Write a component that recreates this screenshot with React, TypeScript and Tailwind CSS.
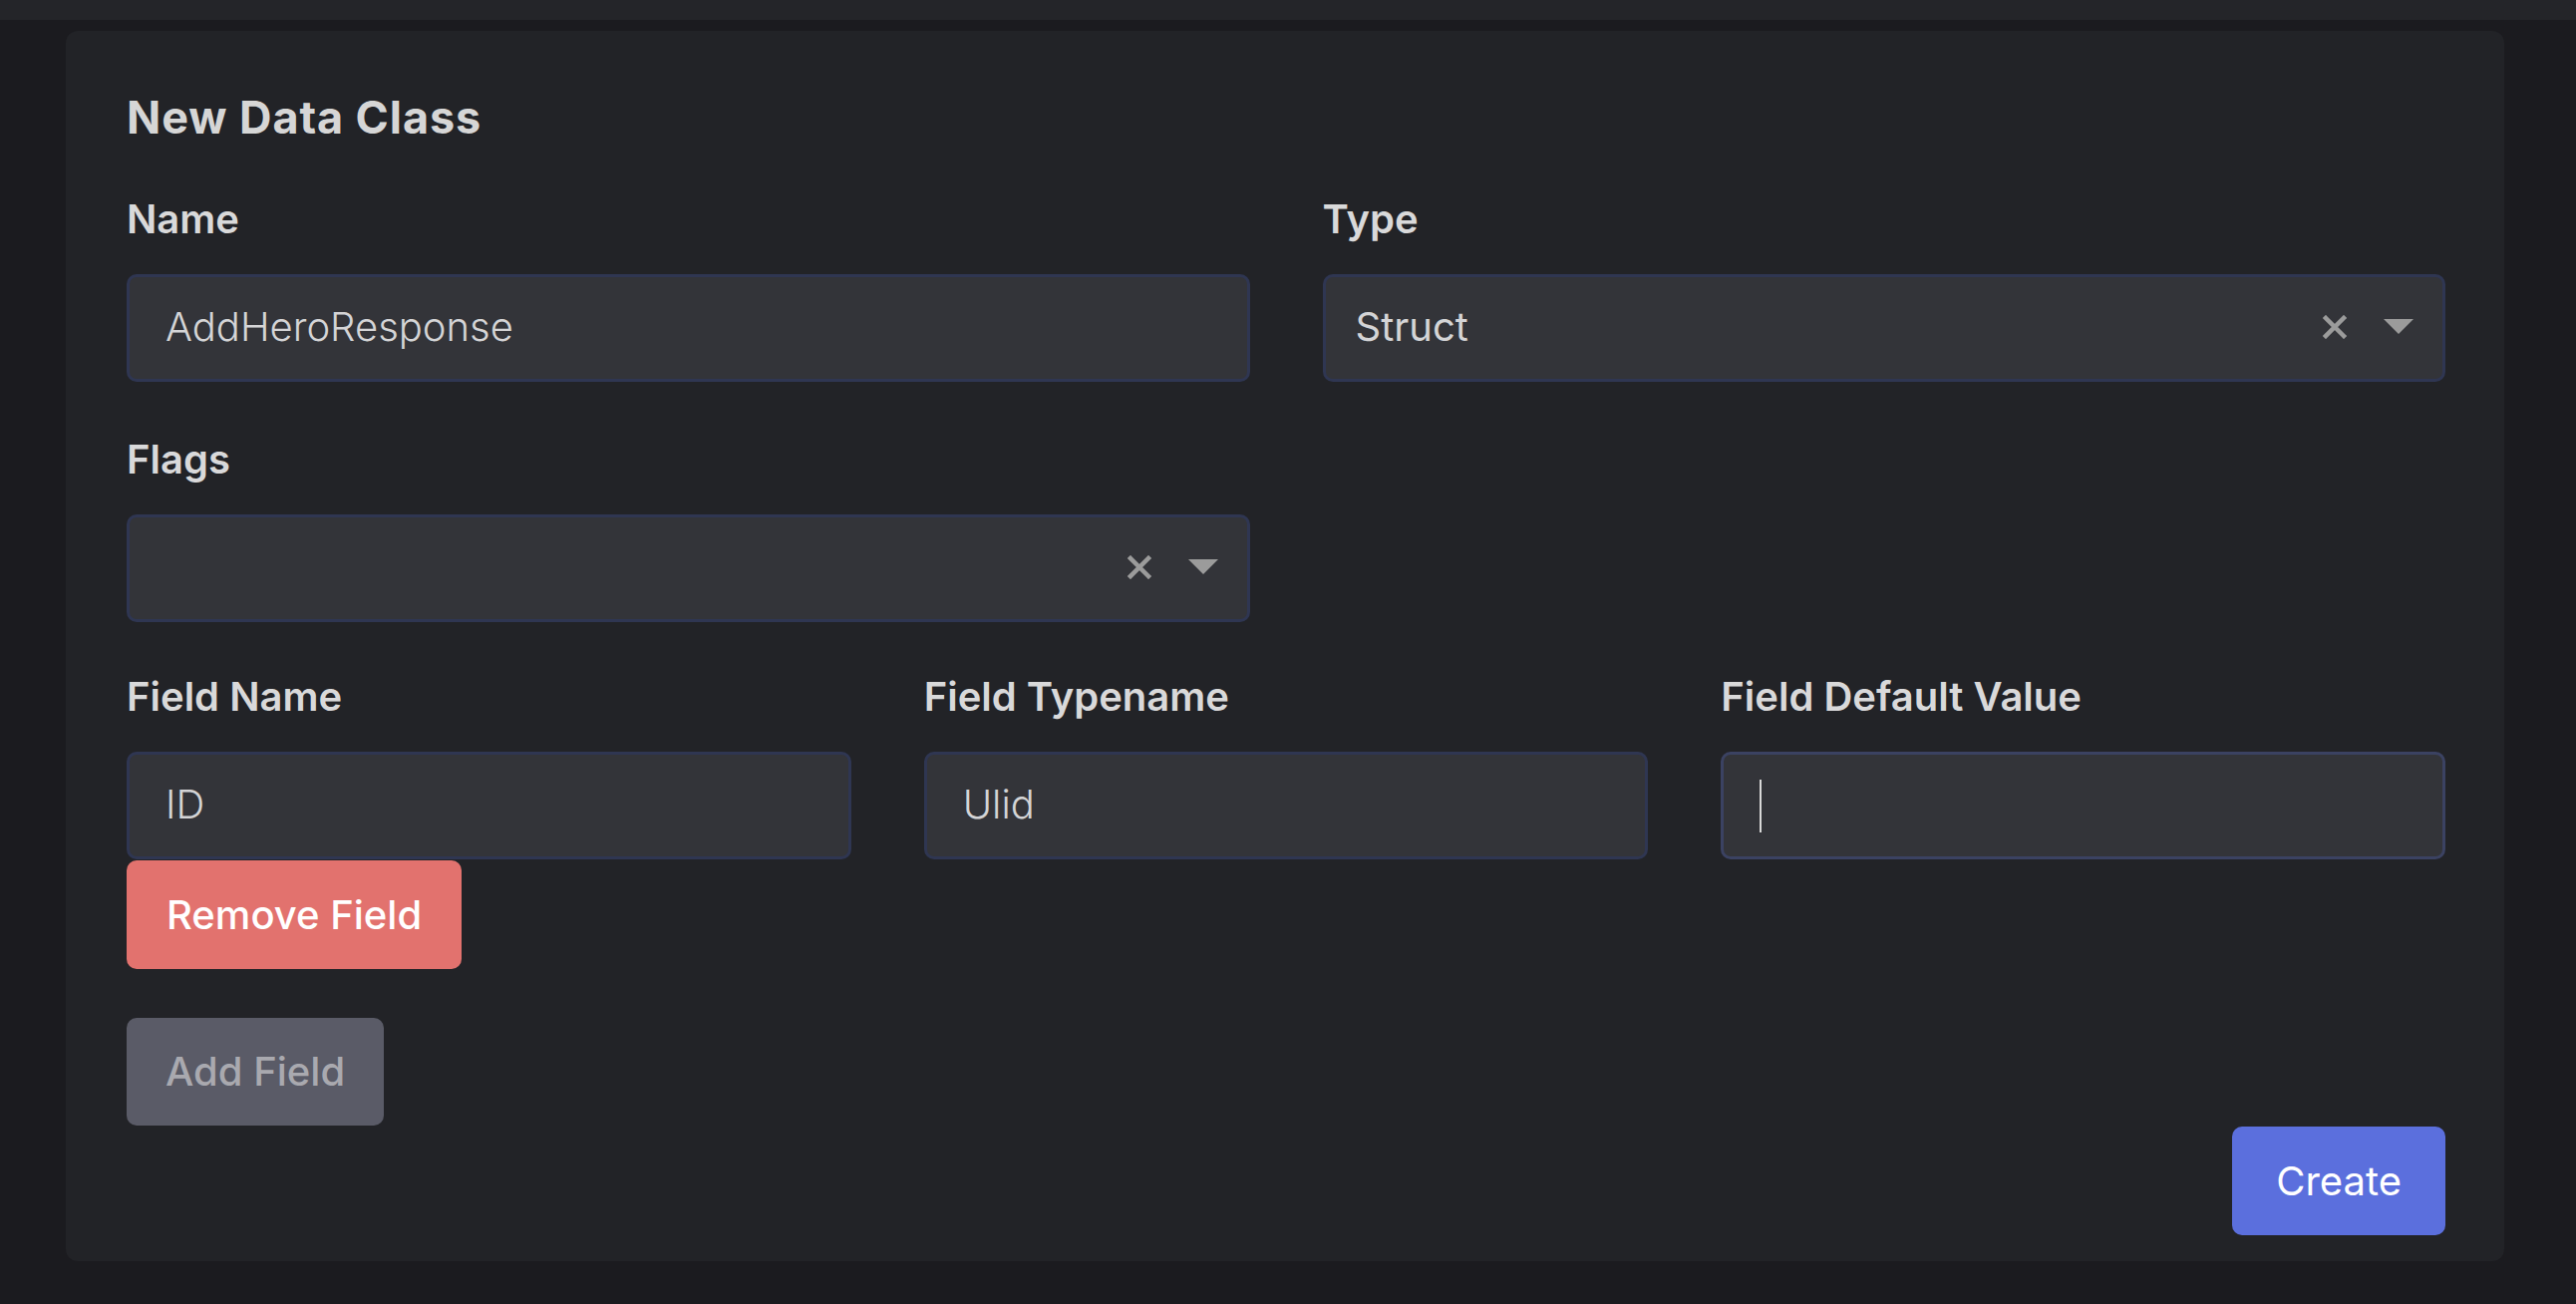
import React from 'react';

const Label: React.FC<{ children: React.ReactNode }> = ({ children }) => (
  <label className="block text-[40px] leading-[48px] font-semibold text-[#d9d9da] mb-[32px] translate-y-[1px]">{children}</label>
);

const TextInput: React.FC<{ value?: string; focused?: boolean }> = ({ value, focused }) => (
  <div
    className={`h-[108px] rounded-[10px] border-[3px] bg-[#333439] flex items-center pl-[36px] pr-[30px] ${
      focused ? 'border-[#3b4262]' : 'border-[#2f3652]'
    }`}
  >
    {value ? (
      <span className="text-[40px] font-light text-[#d4d4d6] -mt-[3px]">{value}</span>
    ) : (
      <span className="w-[2px] h-[53px] bg-[#d8d8d8]" />
    )}
  </div>
);

const Select: React.FC<{ value?: string }> = ({ value }) => (
  <div className="h-[108px] rounded-[10px] border-[3px] border-[#2f3652] bg-[#333439] flex items-center pl-[30px] pr-[29px]">
    <span className="flex-1 text-[40px] text-[#d4d4d6] -mt-[3px]">{value}</span>
    <svg width="24" height="24" viewBox="0 0 24 24" className="mr-[37px] -mt-[3px]">
      <path d="M3 3 L21 21 M21 3 L3 21" stroke="#9b9b9b" strokeWidth="4.5" strokeLinecap="square" />
    </svg>
    <svg width="30" height="15" viewBox="0 0 30 15" className="-mt-[3px]">
      <path d="M0 0 H30 L15 15 Z" fill="#9b9b9b" />
    </svg>
  </div>
);

const App: React.FC = () => {
  return (
    <div className="min-h-screen bg-[#1b1b1f] font-['Inter','Noto_Sans',sans-serif]">
      <div className="h-[20px] bg-[#242529]" />
      <div className="pl-[66px] pr-[72px] pt-[11px] pb-[44px]">
        <div className="rounded-[12px] bg-[#222327] pt-[60px] pl-[61px] pr-[59px] pb-[26px]">
          <h2 className="text-[45px] leading-[54px] font-bold tracking-[0.9px] text-[#d6d6d6]">New Data Class</h2>

          <div className="mt-[50px] grid grid-cols-2 gap-x-[73px]">
            <div>
              <Label>Name</Label>
              <TextInput value="AddHeroResponse" />
            </div>
            <div>
              <Label>Type</Label>
              <Select value="Struct" />
            </div>
          </div>

          <div className="mt-[53px] grid grid-cols-2 gap-x-[73px]">
            <div>
              <Label>Flags</Label>
              <Select />
            </div>
          </div>

          <div className="mt-[50px] grid grid-cols-3 gap-x-[73px]">
            <div>
              <Label>Field Name</Label>
              <TextInput value="ID" />
            </div>
            <div>
              <Label>Field Typename</Label>
              <TextInput value="Ulid" />
            </div>
            <div>
              <Label>Field Default Value</Label>
              <TextInput focused />
            </div>
          </div>

          <button className="mt-[1px] h-[109px] px-[40px] rounded-[10px] bg-[#e2726e] text-white text-[40px] font-medium">
            Remove Field
          </button>

          <div className="mt-[49px]">
            <button className="h-[108px] px-[39px] rounded-[10px] bg-[#5a5b67] text-[#a9a9af] text-[40px] font-medium">
              Add Field
            </button>
          </div>

          <div className="mt-[1px] flex justify-end">
            <button className="h-[109px] px-[44px] rounded-[10px] bg-[#5b6fdd] text-white text-[40px] font-normal">
              Create
            </button>
          </div>
        </div>
      </div>
    </div>
  );
};

export default App;
